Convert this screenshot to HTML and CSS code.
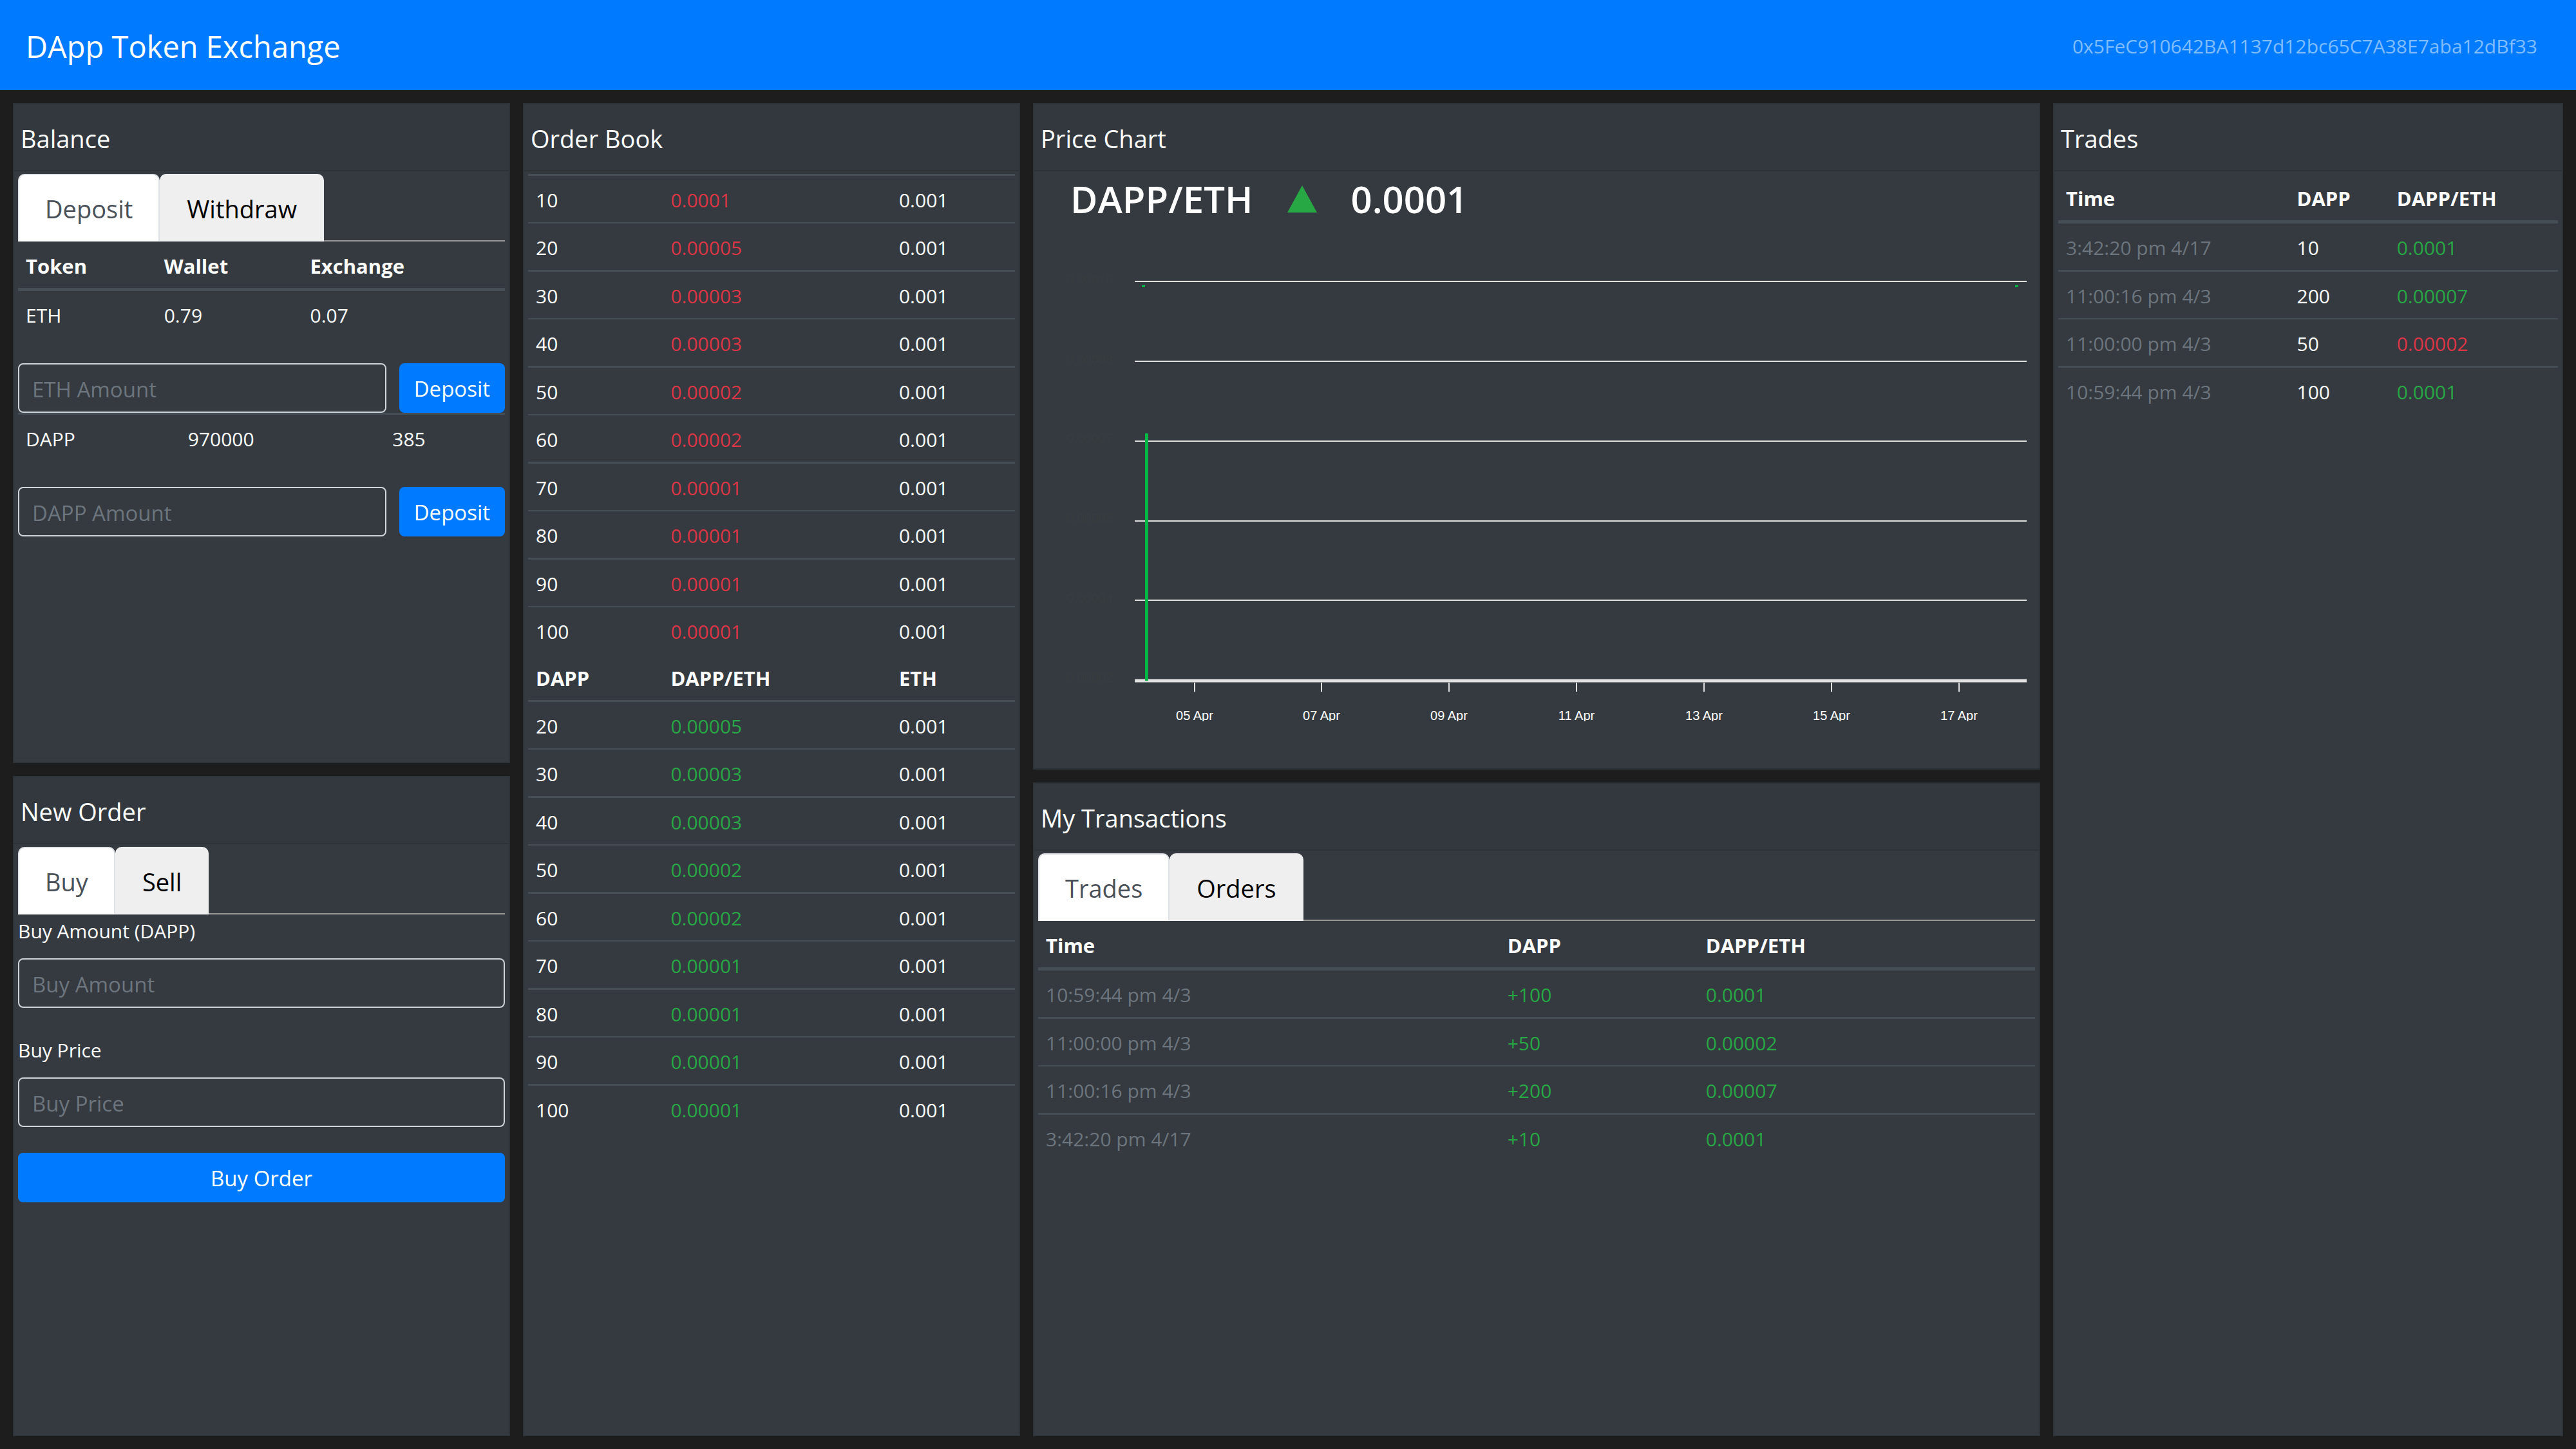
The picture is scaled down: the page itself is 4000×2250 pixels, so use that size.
FILE: index.html
```html
<!DOCTYPE html>
<html lang="en">
<head>
<meta charset="utf-8">
<meta name="viewport" content="width=device-width, initial-scale=1">
<title>DApp Token Exchange</title>
<link rel="stylesheet" href="styles.css">
</head>
<body>
<header class="navbar">
  <a class="brand" href="#">DApp Token Exchange</a>
  <a class="account" href="#">0x5FeC910642BA1137d12bc65C7A38E7aba12dBf33</a>
</header>
<main class="board">
  <div class="stack">
    <section class="card grow">
      <h2 class="card-title">Balance</h2>
      <div class="card-body">
        <div class="tabs" role="tablist">
          <button class="tab active" type="button" role="tab" aria-selected="true">Deposit</button>
          <button class="tab" type="button" role="tab" aria-selected="false">Withdraw</button>
        </div>
        <table class="table balance-eth">
          <colgroup><col class="c1"><col class="c2"><col></colgroup>
          <thead><tr><th>Token</th><th>Wallet</th><th>Exchange</th></tr></thead>
          <tbody><tr><td>ETH</td><td>0.79</td><td>0.07</td></tr></tbody>
        </table>
        <form class="inline-form">
          <input class="field" type="text" placeholder="ETH Amount" aria-label="ETH Amount">
          <button class="btn" type="button">Deposit</button>
        </form>
        <table class="table balance-dapp">
          <colgroup><col class="c1"><col class="c2"><col></colgroup>
          <tbody><tr><td>DAPP</td><td>970000</td><td>385</td></tr></tbody>
        </table>
        <form class="inline-form">
          <input class="field" type="text" placeholder="DAPP Amount" aria-label="DAPP Amount">
          <button class="btn" type="button">Deposit</button>
        </form>
      </div>
    </section>
    <section class="card grow">
      <h2 class="card-title">New Order</h2>
      <div class="card-body">
        <div class="tabs" role="tablist">
          <button class="tab active" type="button" role="tab" aria-selected="true">Buy</button>
          <button class="tab" type="button" role="tab" aria-selected="false">Sell</button>
        </div>
        <form class="order-form">
          <div class="group">
            <label for="buy-amount">Buy Amount (DAPP)</label>
            <input class="field" id="buy-amount" type="text" placeholder="Buy Amount">
          </div>
          <div class="group">
            <label for="buy-price">Buy Price</label>
            <input class="field" id="buy-price" type="text" placeholder="Buy Price">
          </div>
          <button class="btn" type="button">Buy Order</button>
        </form>
      </div>
    </section>
  </div>

  <section class="card">
    <h2 class="card-title">Order Book</h2>
    <div class="card-body">
      <table class="table order-book">
        <colgroup><col class="c1"><col class="c2"><col></colgroup>
        <tbody>
          <tr><td>10</td><td class="red">0.0001</td><td>0.001</td></tr>
          <tr><td>20</td><td class="red">0.00005</td><td>0.001</td></tr>
          <tr><td>30</td><td class="red">0.00003</td><td>0.001</td></tr>
          <tr><td>40</td><td class="red">0.00003</td><td>0.001</td></tr>
          <tr><td>50</td><td class="red">0.00002</td><td>0.001</td></tr>
          <tr><td>60</td><td class="red">0.00002</td><td>0.001</td></tr>
          <tr><td>70</td><td class="red">0.00001</td><td>0.001</td></tr>
          <tr><td>80</td><td class="red">0.00001</td><td>0.001</td></tr>
          <tr><td>90</td><td class="red">0.00001</td><td>0.001</td></tr>
          <tr><td>100</td><td class="red">0.00001</td><td>0.001</td></tr>
        </tbody>
        <tbody><tr><th>DAPP</th><th>DAPP/ETH</th><th>ETH</th></tr></tbody>
        <tbody>
          <tr><td>20</td><td class="green">0.00005</td><td>0.001</td></tr>
          <tr><td>30</td><td class="green">0.00003</td><td>0.001</td></tr>
          <tr><td>40</td><td class="green">0.00003</td><td>0.001</td></tr>
          <tr><td>50</td><td class="green">0.00002</td><td>0.001</td></tr>
          <tr><td>60</td><td class="green">0.00002</td><td>0.001</td></tr>
          <tr><td>70</td><td class="green">0.00001</td><td>0.001</td></tr>
          <tr><td>80</td><td class="green">0.00001</td><td>0.001</td></tr>
          <tr><td>90</td><td class="green">0.00001</td><td>0.001</td></tr>
          <tr><td>100</td><td class="green">0.00001</td><td>0.001</td></tr>
        </tbody>
      </table>
    </div>
  </section>

  <div class="stack">
    <section class="card">
      <h2 class="card-title">Price Chart</h2>
      <div class="card-body">
        <h3 class="price">
          <span>DAPP/ETH</span>
          <svg class="arrow" viewBox="0 0 48 42" aria-hidden="true"><path d="M24 0 47 42H1z" fill="#28a745"/></svg>
          <span>0.0001</span>
        </h3>
        <svg class="chart" viewBox="0 0 1548 837" role="img" aria-label="DAPP/ETH candlestick chart">
          <defs><clipPath id="axis-clip"><rect x="0" y="740" width="1548" height="30"/></clipPath></defs>
          <g class="y-labels">
            <text x="116" y="91">0.00010</text>
            <text x="116" y="215">0.00008</text>
            <text x="116" y="338">0.00007</text>
            <text x="116" y="462">0.00005</text>
            <text x="116" y="586">0.00004</text>
            <text x="116" y="709">0.00002</text>
          </g>
          <g class="grid">
            <path d="M150 87H1535M150 211H1535M150 335H1535M150 459H1535M150 582H1535"/>
            <path class="base" d="M150 707H1535"/>
            <path d="M243 710V724M440 710V724M638 710V724M836 710V724M1034 710V724M1232 710V724M1430 710V724"/>
          </g>
          <g class="candles">
            <rect x="161" y="93" width="5" height="3"/>
            <rect x="166" y="323" width="5" height="384"/>
            <rect x="1517" y="93" width="5" height="3"/>
          </g>
          <g class="x-labels" clip-path="url(#axis-clip)">
            <text x="243" y="768">05 Apr</text>
            <text x="440" y="768">07 Apr</text>
            <text x="638" y="768">09 Apr</text>
            <text x="836" y="768">11 Apr</text>
            <text x="1034" y="768">13 Apr</text>
            <text x="1232" y="768">15 Apr</text>
            <text x="1430" y="768">17 Apr</text>
          </g>
        </svg>
      </div>
    </section>
    <section class="card grow">
      <h2 class="card-title">My Transactions</h2>
      <div class="card-body">
        <div class="tabs" role="tablist">
          <button class="tab active" type="button" role="tab" aria-selected="true">Trades</button>
          <button class="tab" type="button" role="tab" aria-selected="false">Orders</button>
        </div>
        <table class="table transactions">
          <colgroup><col class="c1"><col class="c2"><col></colgroup>
          <thead><tr><th>Time</th><th>DAPP</th><th>DAPP/ETH</th></tr></thead>
          <tbody>
            <tr><td class="muted">10:59:44 pm 4/3</td><td class="green">+100</td><td class="green">0.0001</td></tr>
            <tr><td class="muted">11:00:00 pm 4/3</td><td class="green">+50</td><td class="green">0.00002</td></tr>
            <tr><td class="muted">11:00:16 pm 4/3</td><td class="green">+200</td><td class="green">0.00007</td></tr>
            <tr><td class="muted">3:42:20 pm 4/17</td><td class="green">+10</td><td class="green">0.0001</td></tr>
          </tbody>
        </table>
      </div>
    </section>
  </div>

  <section class="card">
    <h2 class="card-title">Trades</h2>
    <div class="card-body">
      <table class="table trades">
        <colgroup><col class="c1"><col class="c2"><col></colgroup>
        <thead><tr><th>Time</th><th>DAPP</th><th>DAPP/ETH</th></tr></thead>
        <tbody>
          <tr><td class="muted">3:42:20 pm 4/17</td><td>10</td><td class="green">0.0001</td></tr>
          <tr><td class="muted">11:00:16 pm 4/3</td><td>200</td><td class="green">0.00007</td></tr>
          <tr><td class="muted">11:00:00 pm 4/3</td><td>50</td><td class="red">0.00002</td></tr>
          <tr><td class="muted">10:59:44 pm 4/3</td><td>100</td><td class="green">0.0001</td></tr>
        </tbody>
      </table>
    </div>
  </section>
</main>
</body>
</html>
```
FILE: styles.css
```css
* { box-sizing: border-box; }

body {
  margin: 0;
  min-height: 100vh;
  display: flex;
  flex-direction: column;
  background: #1d1d1d;
  color: #fff;
  font-family: "Open Sans", "Noto Sans", sans-serif;
  font-size: 30px;
  line-height: 48px;
}

button, input { font: inherit; }

/* Top bar */
.navbar {
  display: flex;
  align-items: center;
  justify-content: space-between;
  height: 140px;
  padding: 4px 60px 0 40px;
  background: #007bff;
}
.navbar a { text-decoration: none; }
.brand { color: #fff; font-size: 47px; }
.account { color: #80bdff; }

/* Columns of cards */
.board {
  flex: 1;
  display: grid;
  grid-template-columns: 772fr 772fr 1564fr 792fr;
  gap: 20px;
  padding: 20px;
}
.stack { display: flex; flex-direction: column; gap: 20px; min-width: 0; }
.card { min-width: 0; background: #343a40; border: 2px solid #2e3338; }
.grow { flex: 1; }
.card-title {
  margin: 0;
  padding: 24px 10px 20px;
  border-bottom: 2px solid #2e3338;
  background: #32383e;
  font-size: 38px;
  font-weight: 400;
  line-height: 58px;
}
.card-body { padding: 4px 6px 6px; }

/* Tabs */
.tabs { display: flex; border-bottom: 2px solid #999; }
.tab {
  margin: 0 0 -2px;
  padding: 24px 40px 20px;
  border: 2px solid #efefef;
  border-radius: 10px 10px 0 0;
  background: #efefef;
  color: #000;
  font-size: 38px;
  line-height: 57px;
}
.tab.active {
  border-color: #dee2e6 #dee2e6 #fff;
  background: #fff;
  color: #495057;
}

/* Tables */
.table {
  width: 100%;
  table-layout: fixed;
  border-collapse: separate;
  border-spacing: 0;
}
.table th, .table td { padding: 14px 12px 10px; text-align: left; white-space: nowrap; }
.table th { font-size: 31px; font-weight: 700; }
.table td { border-top: 2px solid #454d55; }
.table tr:nth-child(odd) td { border-top-width: 3px; }
.table thead th { border-bottom: 5px solid #454d55; }
.table thead + tbody tr:nth-child(odd) td { border-top-width: 2px; }
.table thead + tbody tr:nth-child(even) td { border-top-width: 3px; }
.table thead + tbody tr:first-child td { border-top: 0; }

.balance-eth .c1 { width: 28.4%; }
.balance-eth .c2 { width: 30%; }
.balance-dapp .c1 { width: 33.3%; }
.balance-dapp .c2 { width: 42%; }
.order-book .c1 { width: 27.7%; }
.order-book .c2 { width: 46.9%; }
.transactions .c1 { width: 46.3%; }
.transactions .c2 { width: 19.9%; }
.trades .c1 { width: 46.2%; }
.trades .c2 { width: 20%; }

.green { color: #28a745; }
.red { color: #dc3545; }
.muted { color: #6c757d; }

/* Forms */
.field {
  width: 100%;
  height: 77px;
  padding: 3px 20px 0;
  border: 2px solid #ced4da;
  border-radius: 8px;
  background: #343a40;
  color: #fff;
  font-size: 33px;
}
.field::placeholder { color: #6c757d; opacity: 1; }
.btn {
  height: 77px;
  padding: 3px 21px 0;
  border: 2px solid #007bff;
  border-radius: 8px;
  background: #007bff;
  color: #fff;
  font-size: 33px;
  white-space: nowrap;
}
.inline-form { display: flex; gap: 20px; margin-top: 40px; }
.inline-form .field { flex: 1; min-width: 0; }
.order-form { display: flex; flex-direction: column; gap: 40px; }
.group { display: flex; flex-direction: column; gap: 18px; }
.group label { padding-top: 2px; }

/* Price chart */
.price {
  display: flex;
  align-items: center;
  gap: 52px;
  margin: 0;
  padding: 0 0 2px 50px;
  font-size: 58px;
  font-weight: 600;
  line-height: 78px;
}
.arrow { width: 48px; height: 42px; }
.chart { display: block; width: 100%; height: auto; }
.chart text { font: 20px "Liberation Sans", Arial, sans-serif; }
.y-labels { fill: #373d3f; text-anchor: end; }
.x-labels { fill: #fff; text-anchor: middle; }
.grid { fill: none; stroke: #e0e0e0; stroke-width: 2; }
.grid .base { stroke-width: 5; }
.candles { fill: #00b746; }
```
